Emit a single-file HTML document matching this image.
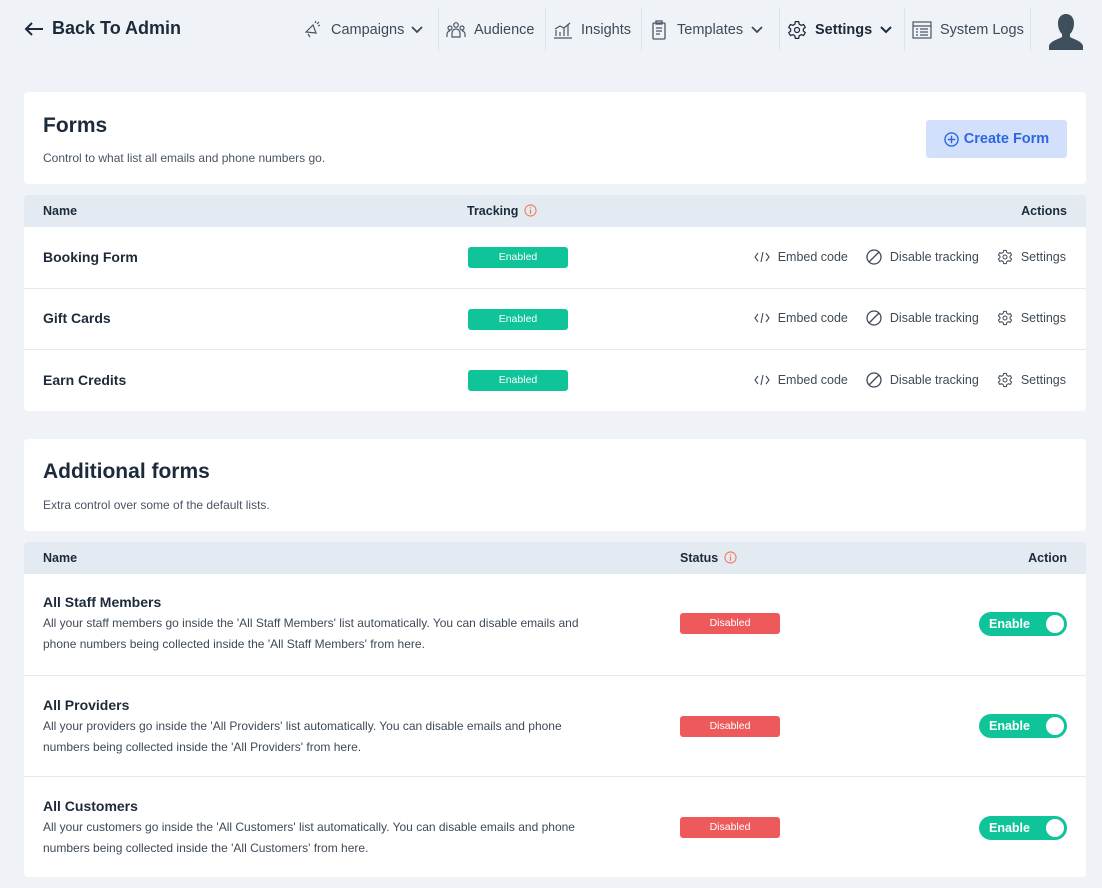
<!DOCTYPE html>
<html><head><meta charset="utf-8"><style>
*{box-sizing:border-box;margin:0;padding:0}
body{width:1102px;height:888px;background:#eff3f8;font-family:"Liberation Sans",sans-serif;color:#1c2a3a;position:relative;overflow:hidden}
.a{position:absolute}
.nav{font-size:14.5px;color:#3e4a57;display:flex;align-items:center;height:58px}
.sep{position:absolute;top:7px;width:1px;height:44px;background:#dde3ea}
.card{position:absolute;left:24px;width:1062px;background:#fff;border-radius:4px}
.th{position:absolute;left:24px;width:1062px;height:32px;background:#e3eaf1;border-radius:4px 4px 0 0;font-size:12.5px;font-weight:bold;color:#1c2a3a}
.row{position:absolute;left:24px;width:1062px;background:#fff;border-top:1px solid #e6eaee}
.name{position:absolute;left:19px;font-size:14px;font-weight:bold}
.badge{position:absolute;width:100px;height:21px;border-radius:3px;color:#fff;font-size:10.5px;text-align:center;line-height:21px}
.en{background:#10c49a;left:444px}
.dis{background:#ee5a5c;left:656px}
.acts{position:absolute;right:20px;font-size:12.5px;color:#3e4a57;display:flex;align-items:center;gap:8px}
.acts svg{margin-left:10px}
.desc{position:absolute;left:19px;font-size:12px;color:#3e4a57;line-height:21px;width:555px}
.tog{position:absolute;right:19px;width:88px;height:24px;border-radius:12px;background:#10c49a;color:#fff;font-size:12.5px;font-weight:bold;line-height:24px;padding-left:10px}
.tog:after{content:"";position:absolute;right:3px;top:3px;width:18px;height:18px;border-radius:50%;background:#fff}
</style></head><body>
<div class="a" style="left:24px;top:18px;font-size:18px;font-weight:bold;color:#1c2a3a;display:flex;align-items:center;gap:8px">
<svg width="20" height="16" viewBox="0 0 20 16"><path d="M19 8H2M8 2L2 8l6 6" stroke="#1c2a3a" stroke-width="2" fill="none"/></svg>Back To Admin</div>

<div class="a nav" style="left:303px;top:1px"><svg width="20" height="20" viewBox="0 0 20 20" fill="none" stroke="#4a5563" stroke-width="1.2"><path d="M3 12l7-7 3 8zM5 14l2 3M12 3l1-2M15 6l2-1M14 4l2-2"/></svg><span style="margin-left:8px">Campaigns</span><svg style="margin-left:7px" width="12" height="8"><path d="M1 1l5 5 5-5" stroke="#3e4a57" stroke-width="1.8" fill="none"/></svg></div>
<div class="sep" style="left:438px"></div>
<div class="a nav" style="left:446px;top:1px"><svg width="20" height="18" viewBox="0 0 20 18" fill="none" stroke="#4a5563" stroke-width="1.2"><circle cx="10" cy="4" r="2.3"/><circle cx="4" cy="7" r="2"/><circle cx="16" cy="7" r="2"/><path d="M6 16v-4a4 4 0 018 0v4zM1 16v-3a3 3 0 013-3M19 16v-3a3 3 0 00-3-3"/></svg><span style="margin-left:8px">Audience</span></div>
<div class="sep" style="left:545px"></div>
<div class="a nav" style="left:553px;top:1px"><svg width="20" height="18" viewBox="0 0 20 18" fill="none" stroke="#4a5563" stroke-width="1.2"><path d="M1 17h18M3 15V9M7 15V11M11 15V7M15 15V4M2 8l5-3 4 2 6-5"/></svg><span style="margin-left:8px">Insights</span></div>
<div class="sep" style="left:641px"></div>
<div class="a nav" style="left:651px;top:1px"><svg width="16" height="20" viewBox="0 0 16 20" fill="none" stroke="#4a5563" stroke-width="1.3"><rect x="2" y="3" width="12" height="16" rx="1"/><rect x="5" y="1" width="6" height="3"/><path d="M5 8h6M5 11h6M5 14h4"/></svg><span style="margin-left:10px">Templates</span><svg style="margin-left:8px" width="12" height="8"><path d="M1 1l5 5 5-5" stroke="#3e4a57" stroke-width="1.8" fill="none"/></svg></div>
<div class="sep" style="left:779px"></div>
<div class="a nav" style="left:787px;top:1px;font-weight:bold;color:#1c2a3a"><svg width="20" height="20" viewBox="0 0 24 24" fill="none" stroke="#1c2a3a" stroke-width="1.5"><circle cx="12" cy="12" r="3"/><path d="M10 2h4l.6 3 2.4 1.4 2.9-1 2 3.4-2.3 2.1v2.2l2.3 2.1-2 3.4-2.9-1-2.4 1.4-.6 3h-4l-.6-3-2.4-1.4-2.9 1-2-3.4 2.3-2.1v-2.2L2.1 8.8l2-3.4 2.9 1L9.4 5z"/></svg><span style="margin-left:8px">Settings</span><svg style="margin-left:8px" width="12" height="8"><path d="M1 1l5 5 5-5" stroke="#1c2a3a" stroke-width="2" fill="none"/></svg></div>
<div class="sep" style="left:904px"></div>
<div class="a nav" style="left:912px;top:1px"><svg width="20" height="18" viewBox="0 0 20 18" fill="none" stroke="#4a5563" stroke-width="1.2"><rect x="1" y="1" width="18" height="16"/><path d="M1 5h18M4 8h2M8 8h8M4 11h2M8 11h8M4 14h2M8 14h8"/></svg><span style="margin-left:8px">System Logs</span></div>
<div class="sep" style="left:1030px"></div>
<svg class="a" style="left:1048px;top:12px" width="36" height="38" viewBox="0 0 36 38"><path d="M18 2c5 0 8 4 8 9 0 4-1 8-4 11v3c3 2 12 4 13 9v4H1v-4c1-5 10-7 13-9v-3c-3-3-4-7-4-11 0-5 3-9 8-9z" fill="#3f4e5b"/></svg>

<div class="card" style="top:92px;height:92px"></div>
<div class="a" style="left:43px;top:114px;font-size:21px;font-weight:bold">Forms</div>
<div class="a" style="left:43px;top:151px;font-size:12px;color:#4a5563">Control to what list all emails and phone numbers go.</div>
<div class="a" style="left:926px;top:120px;width:141px;height:38px;background:#d3e0fb;border-radius:3px;color:#2f66e0;font-size:14.5px;font-weight:bold;display:flex;align-items:center;justify-content:center;gap:5px"><svg width="15" height="15" viewBox="0 0 16 16" fill="none" stroke="#2f66e0" stroke-width="1.5"><circle cx="8" cy="8" r="7"/><path d="M8 4v8M4 8h8"/></svg>Create Form</div>

<div class="th" style="top:195px"><span class="a" style="left:19px;top:9px">Name</span><span class="a" style="left:443px;top:9px">Tracking <svg width="13" height="13" viewBox="0 0 14 14" style="vertical-align:-2px;margin-left:2px"><circle cx="7" cy="7" r="6" fill="none" stroke="#f0775a" stroke-width="1.1"/><path d="M7 6v4.5M7 3.5v1.2" stroke="#f0775a" stroke-width="1.3"/></svg></span><span class="a" style="right:19px;top:9px">Actions</span></div>

<div class="row" style="top:227px;height:62px;border-top:none"></div>
<div class="row" style="top:288px;height:62px"></div>
<div class="row" style="top:349px;height:62px;border-radius:0 0 4px 4px"></div>

<div class="card" style="top:439px;height:92px"></div>
<div class="a" style="left:43px;top:460px;font-size:21px;font-weight:bold">Additional forms</div>
<div class="a" style="left:43px;top:498px;font-size:12px;color:#4a5563">Extra control over some of the default lists.</div>

<div class="th" style="top:542px"><span class="a" style="left:19px;top:9px">Name</span><span class="a" style="left:656px;top:9px">Status <svg width="13" height="13" viewBox="0 0 14 14" style="vertical-align:-2px;margin-left:2px"><circle cx="7" cy="7" r="6" fill="none" stroke="#f0775a" stroke-width="1.1"/><path d="M7 6v4.5M7 3.5v1.2" stroke="#f0775a" stroke-width="1.3"/></svg></span><span class="a" style="right:19px;top:9px">Action</span></div>

<div class="row" style="top:574px;height:101px;border-top:none"><div class="name" style="top:20px">All Staff Members</div><div class="desc" style="top:39px">All your staff members go inside the 'All Staff Members' list automatically. You can disable emails and phone numbers being collected inside the 'All Staff Members' from here.</div><div class="badge dis" style="top:39px">Disabled</div><div class="tog" style="top:38px">Enable</div></div>
<div class="row" style="top:675px;height:102px"><div class="name" style="top:21px">All Providers</div><div class="desc" style="top:40px">All your providers go inside the 'All Providers' list automatically. You can disable emails and phone numbers being collected inside the 'All Providers' from here.</div><div class="badge dis" style="top:40px">Disabled</div><div class="tog" style="top:38px">Enable</div></div>
<div class="row" style="top:776px;height:101px;border-radius:0 0 4px 4px"><div class="name" style="top:21px">All Customers</div><div class="desc" style="top:40px">All your customers go inside the 'All Customers' list automatically. You can disable emails and phone numbers being collected inside the 'All Customers' from here.</div><div class="badge dis" style="top:40px">Disabled</div><div class="tog" style="top:39px">Enable</div></div>

<div class="row" style="top:227px;height:62px;border-top:none;background:transparent"><div class="name" style="top:22px">Booking Form</div><div class="badge en" style="top:20px">Enabled</div><div class="acts" style="top:22px"><svg width="16" height="12" viewBox="0 0 16 12" fill="none" stroke="#3e4a57" stroke-width="1.1"><path d="M4 2L1 6l3 4M12 2l3 4-3 4M9 1L7 11"/></svg><span>Embed code</span><svg width="16" height="16" viewBox="0 0 16 16" fill="none" stroke="#3e4a57" stroke-width="1.3"><circle cx="8" cy="8" r="7"/><path d="M3 13L13 3"/></svg><span>Disable tracking</span><svg width="16" height="16" viewBox="0 0 24 24" fill="none" stroke="#3e4a57" stroke-width="1.5"><circle cx="12" cy="12" r="3"/><path d="M10 2h4l.6 3 2.4 1.4 2.9-1 2 3.4-2.3 2.1v2.2l2.3 2.1-2 3.4-2.9-1-2.4 1.4-.6 3h-4l-.6-3-2.4-1.4-2.9 1-2-3.4 2.3-2.1v-2.2L2.1 8.8l2-3.4 2.9 1L9.4 5z"/></svg><span>Settings</span></div></div>
<div class="row" style="top:288px;height:62px;border-top:none;background:transparent"><div class="name" style="top:22px">Gift Cards</div><div class="badge en" style="top:21px">Enabled</div><div class="acts" style="top:22px"><svg width="16" height="12" viewBox="0 0 16 12" fill="none" stroke="#3e4a57" stroke-width="1.1"><path d="M4 2L1 6l3 4M12 2l3 4-3 4M9 1L7 11"/></svg><span>Embed code</span><svg width="16" height="16" viewBox="0 0 16 16" fill="none" stroke="#3e4a57" stroke-width="1.3"><circle cx="8" cy="8" r="7"/><path d="M3 13L13 3"/></svg><span>Disable tracking</span><svg width="16" height="16" viewBox="0 0 24 24" fill="none" stroke="#3e4a57" stroke-width="1.5"><circle cx="12" cy="12" r="3"/><path d="M10 2h4l.6 3 2.4 1.4 2.9-1 2 3.4-2.3 2.1v2.2l2.3 2.1-2 3.4-2.9-1-2.4 1.4-.6 3h-4l-.6-3-2.4-1.4-2.9 1-2-3.4 2.3-2.1v-2.2L2.1 8.8l2-3.4 2.9 1L9.4 5z"/></svg><span>Settings</span></div></div>
<div class="row" style="top:349px;height:62px;border-top:none;background:transparent"><div class="name" style="top:23px">Earn Credits</div><div class="badge en" style="top:21px">Enabled</div><div class="acts" style="top:23px"><svg width="16" height="12" viewBox="0 0 16 12" fill="none" stroke="#3e4a57" stroke-width="1.1"><path d="M4 2L1 6l3 4M12 2l3 4-3 4M9 1L7 11"/></svg><span>Embed code</span><svg width="16" height="16" viewBox="0 0 16 16" fill="none" stroke="#3e4a57" stroke-width="1.3"><circle cx="8" cy="8" r="7"/><path d="M3 13L13 3"/></svg><span>Disable tracking</span><svg width="16" height="16" viewBox="0 0 24 24" fill="none" stroke="#3e4a57" stroke-width="1.5"><circle cx="12" cy="12" r="3"/><path d="M10 2h4l.6 3 2.4 1.4 2.9-1 2 3.4-2.3 2.1v2.2l2.3 2.1-2 3.4-2.9-1-2.4 1.4-.6 3h-4l-.6-3-2.4-1.4-2.9 1-2-3.4 2.3-2.1v-2.2L2.1 8.8l2-3.4 2.9 1L9.4 5z"/></svg><span>Settings</span></div></div>
</body></html>
